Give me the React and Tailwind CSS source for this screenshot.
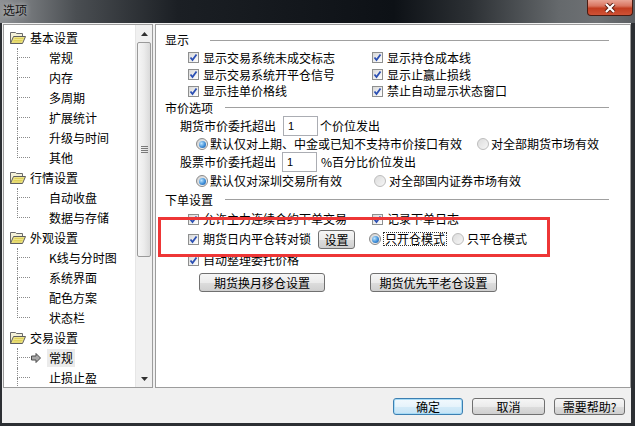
import React from "react";

const F = "font-['Noto_Sans_CJK_SC','Liberation_Sans',sans-serif]";

function Folder() {
  return (
    <svg width="16" height="14" viewBox="0 0 16 14">
      <path d="M0.5 12.5 V1.5 H5.5 L6.5 2.5 H12.5 V5.5" fill="#f4f1d8" stroke="#6b6b6b" />
      <path d="M0.5 12.5 L3.5 5.5 H15.5 L12.5 12.5 Z" fill="#efe58a" stroke="#5e5e5e" />
      <path d="M4.5 7.5 H13.5 M3.5 9.5 H12.5 M2.5 11 H11.5" stroke="#d8c94a" strokeWidth="0.8" />
    </svg>
  );
}

function Arrow() {
  return (
    <svg width="10" height="10" viewBox="0 0 10 10">
      <polygon points="0.5,3 5,3 5,0.5 9.5,5 5,9.5 5,7 0.5,7" fill="#a8a8a8" stroke="#4a4a4a" />
    </svg>
  );
}

function Conn({ last }) {
  return (
    <div className="w-[13px] h-[20px] flex flex-col shrink-0">
      <div className="h-[10px] border-l border-b border-dotted border-[#8a8a8a]" />
      <div className={last ? "h-[10px]" : "h-[10px] border-l border-dotted border-[#8a8a8a]"} />
    </div>
  );
}

const groups = [
  { name: "基本设置", children: ["常规", "内存", "多周期", "扩展统计", "升级与时间", "其他"] },
  { name: "行情设置", children: ["自动收盘", "数据与存储"] },
  { name: "外观设置", children: ["K线与分时图", "系统界面", "配色方案", "状态栏"] },
  { name: "交易设置", children: ["常规", "止损止盈"], sel: 0, more: true },
];

function Tree() {
  return (
    <div className="w-[150px] h-[364px] border border-[#9c9c9c] bg-white flex overflow-hidden">
      <div className="flex-1 pt-[3px] flex flex-col">
        {groups.map((g) => (
          <div key={g.name} className="flex flex-col">
            <div className="h-[20px] flex items-center pl-[6px] gap-[4px] shrink-0">
              <Folder />
              <span className="leading-[20px]">{g.name}</span>
            </div>
            {g.children.map((c, i) => (
              <div key={c + i} className="h-[20px] flex items-center pl-[13px] shrink-0">
                <Conn last={i === g.children.length - 1 && !g.more} />
                {g.sel === i ? (
                  <div className="flex items-center">
                    <div className="ml-[1px] w-[10px] flex items-center"><Arrow /></div>
                    <span className="ml-[6px] px-[2px] bg-[#ebebeb] leading-[18px]">{c}</span>
                  </div>
                ) : (
                  <span className="ml-[19px] leading-[20px]">{c}</span>
                )}
              </div>
            ))}
          </div>
        ))}
      </div>
      <div className="w-[17px] bg-[#f0f0f0] border-l border-[#e6e6e6] flex flex-col">
        <div className="h-[17px] flex items-center justify-center shrink-0">
          <svg width="7" height="4" viewBox="0 0 7 4"><polygon points="0,4 3.5,0 7,4" fill="#303030" /></svg>
        </div>
        <div className="h-[215px] mx-[1px] rounded-[2px] border border-[#9a9a9a] bg-[linear-gradient(90deg,#f6f6f6_0%,#ececec_50%,#dadada_100%)] flex flex-col items-center justify-center gap-[1px] shrink-0">
          <div className="w-[7px] h-px bg-[#7a7a7a]" />
          <div className="w-[7px] h-px bg-[#7a7a7a]" />
          <div className="w-[7px] h-px bg-[#7a7a7a]" />
          <div className="w-[7px] h-px bg-[#7a7a7a]" />
        </div>
        <div className="flex-1" />
        <div className="h-[17px] flex items-center justify-center shrink-0">
          <svg width="7" height="4" viewBox="0 0 7 4"><polygon points="0,0 3.5,4 7,0" fill="#303030" /></svg>
        </div>
      </div>
    </div>
  );
}

function Check() {
  return (
    <div className="w-[11px] h-[11px] border border-[#8e8f8f] bg-[linear-gradient(135deg,#d8d8d8_0%,#f4f4f4_70%,#ffffff_100%)] flex items-center justify-center shrink-0">
      <svg width="9" height="9" viewBox="0 0 9 9">
        <path d="M1.5 4.5 L3.5 7 L7.5 1.5" fill="none" stroke="#2b4fb3" strokeWidth="1.8" />
      </svg>
    </div>
  );
}

function Radio({ on }) {
  return on ? (
    <div className="w-[12px] h-[12px] rounded-full border border-[#8a8a8a] bg-[linear-gradient(135deg,#d0d0d0,#fafafa)] flex items-center justify-center shrink-0">
      <div className="w-[7px] h-[7px] rounded-full bg-[radial-gradient(circle_at_35%_35%,#bfe6ff_0%,#3f8fd8_55%,#1d4f99_100%)]" />
    </div>
  ) : (
    <div className="w-[12px] h-[12px] rounded-full border border-[#bdbdbd] bg-[linear-gradient(135deg,#dcdcdc,#f6f6f6)] shrink-0" />
  );
}

function CB({ children, w }) {
  return (
    <div className={`flex items-center gap-[4px] ${w || ""}`}>
      <Check />
      <span className="whitespace-nowrap">{children}</span>
    </div>
  );
}

function Heading({ text, gap, h }) {
  return (
    <div className={`flex items-center pl-[9px] pr-[21px] ${h}`}>
      <span className="whitespace-nowrap leading-[16px]">{text}</span>
      <div className={`flex-1 h-px bg-[#a0a0a0] ${gap}`} />
    </div>
  );
}

function Btn({ children, w }) {
  return (
    <div className={`h-[19px] ${w} border border-[#707070] rounded-[3px] bg-[linear-gradient(180deg,#f6f6f6_0%,#ebebeb_50%,#dddddd_51%,#cfcfcf_100%)] flex items-center justify-center leading-[17px] whitespace-nowrap shrink-0`}>
      {children}
    </div>
  );
}

function Input() {
  return (
    <div className="w-[35px] h-[20px] border border-[#abadb3] bg-white pl-[4px] leading-[18px] text-[11px] font-['Liberation_Sans',sans-serif]">1</div>
  );
}

function RightPanel() {
  return (
    <div className="relative w-[476px] h-[364px] border border-[#9c9c9c] bg-white flex flex-col pt-[6px]">
      <Heading text="显示" gap="ml-[21px]" h="h-[18px]" />
      <div className="h-[17px] flex items-center pl-[32px]">
        <CB w="w-[184px]">显示交易系统未成交标志</CB>
        <CB>显示持仓成本线</CB>
      </div>
      <div className="h-[17px] flex items-center pl-[32px]">
        <CB w="w-[184px]">显示交易系统开平仓信号</CB>
        <CB>显示止赢止损线</CB>
      </div>
      <div className="h-[16px] flex items-center pl-[32px]">
        <CB w="w-[184px]">显示挂单价格线</CB>
        <CB>禁止自动显示状态窗口</CB>
      </div>
      <Heading text="市价选项" gap="ml-[12px]" h="h-[17px]" />
      <div className="h-[20px] flex items-center pl-[24px]">
        <span className="whitespace-nowrap">期货市价委托超出</span>
        <div className="ml-[7px]"><Input /></div>
        <span className="ml-[2px] whitespace-nowrap">个价位发出</span>
      </div>
      <div className="h-[16px] flex items-center pl-[40px]">
        <Radio on />
        <span className="ml-[2px] whitespace-nowrap">默认仅对上期、中金或已知不支持市价接口有效</span>
        <div className="ml-[15px]"><Radio /></div>
        <span className="ml-[2px] whitespace-nowrap">对全部期货市场有效</span>
      </div>
      <div className="h-[20px] flex items-center pl-[24px]">
        <span className="whitespace-nowrap">股票市价委托超出</span>
        <div className="ml-[6px]"><Input /></div>
        <span className="ml-[4px] whitespace-nowrap">%百分比价位发出</span>
      </div>
      <div className="h-[18px] flex items-center pl-[40px]">
        <Radio on />
        <span className="ml-[2px] w-[164px] whitespace-nowrap">默认仅对深圳交易所有效</span>
        <Radio />
        <span className="ml-[3px] whitespace-nowrap">对全部国内证券市场有效</span>
      </div>
      <Heading text="下单设置" gap="ml-[12px]" h="h-[19px]" />
      <div className="h-[20px] flex items-center pl-[32px]">
        <CB w="w-[184px]">允许主力连续合约下单交易</CB>
        <CB>记录下单日志</CB>
      </div>
      <div className="h-[20px] flex items-center pl-[32px]">
        <CB>期货日内平仓转对锁</CB>
        <div className="ml-[7px]"><Btn w="w-[37px]">设置</Btn></div>
        <div className="ml-[14px]"><Radio on /></div>
        <span className="ml-[2px] px-[1px] border border-dotted border-[#333] leading-[12px] whitespace-nowrap">只开仓模式</span>
        <div className="ml-[5px]"><Radio /></div>
        <span className="ml-[3px] whitespace-nowrap">只平仓模式</span>
      </div>
      <div className="h-[22px] flex items-center pl-[32px]">
        <CB>自动整理委托价格</CB>
      </div>
      <div className="pt-[2px] flex items-center pl-[43px]">
        <Btn w="w-[126px]">期货换月移仓设置</Btn>
        <div className="ml-[45px]"><Btn w="w-[127px]">期货优先平老仓设置</Btn></div>
      </div>
      <div className="absolute left-[2px] top-[192px] w-[392px] h-[40px] border-[3px] border-[#ee3636]" />
    </div>
  );
}

export default function App() {
  return (
    <div className={`w-[635px] h-[426px] bg-[#2c2f33] flex flex-col overflow-hidden text-[12px] text-black ${F}`}>
      <div className="relative h-[23px] shrink-0 pl-[3px] pt-[1px] bg-[linear-gradient(90deg,#8e9194_0%,#4a4e52_12%,#1b1f24_28%,#0d1116_62%,#2c3034_74%,#65696c_88%,#6e7174_94%,#5b5e62_100%)]">
        <span className="leading-[16px] text-[#141414] [text-shadow:0_0_5px_#d8d8d8]">选项</span>
        <div className="absolute right-[2px] top-0 w-[46px] h-[16px] rounded-b-[4px] border border-t-0 border-[#4a1c12] bg-[linear-gradient(180deg,#e9a595_0%,#d97560_40%,#c23d20_55%,#cf5236_100%)] flex items-center justify-center">
          <svg width="12" height="10" viewBox="0 0 12 10">
            <path d="M2 1 L10 9 M10 1 L2 9" stroke="#5a1a0e" strokeWidth="4" />
            <path d="M2 1 L10 9 M10 1 L2 9" stroke="#ffffff" strokeWidth="2.2" />
          </svg>
        </div>
      </div>
      <div className="flex-1 ml-[2px] mr-[4px] mb-[3px] bg-[#f0f0f0] flex flex-col">
        <div className="flex pt-[1px] pl-[1px] gap-[2px] h-[365px] shrink-0">
          <Tree />
          <RightPanel />
        </div>
        <div className="flex justify-end gap-[9px] pr-[6px] pt-[10px]">
          <div className="w-[70px] h-[17px] border border-[#3c7fb1] rounded-[3px] bg-[linear-gradient(180deg,#f2f9fd_0%,#e6f3fb_50%,#d4ebf8_51%,#c6e3f5_100%)] shadow-[inset_0_0_0_1px_#a7dbf6] flex items-center justify-center leading-[15px]">确定</div>
          <div className="w-[73px] h-[17px] border border-[#707070] rounded-[3px] bg-[linear-gradient(180deg,#f6f6f6_0%,#ebebeb_50%,#dddddd_51%,#cfcfcf_100%)] flex items-center justify-center leading-[15px]">取消</div>
          <div className="w-[71px] h-[17px] border border-[#707070] rounded-[3px] bg-[linear-gradient(180deg,#f6f6f6_0%,#ebebeb_50%,#dddddd_51%,#cfcfcf_100%)] flex items-center justify-center leading-[15px]">需要帮助?</div>
        </div>
      </div>
    </div>
  );
}
